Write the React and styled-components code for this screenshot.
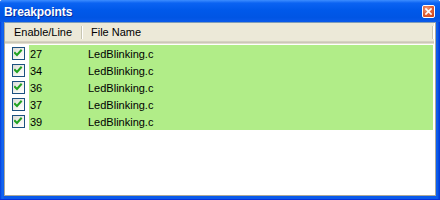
import React from 'react';
import styled, { createGlobalStyle } from 'styled-components';

const GlobalStyle = createGlobalStyle`
  html, body {
    margin: 0;
    padding: 0;
    background: #ffffff;
  }
  body {
    font-family: "Liberation Sans", Arial, sans-serif;
  }
`;

const breakpoints = [
  { line: 27, file: 'LedBlinking.c' },
  { line: 34, file: 'LedBlinking.c' },
  { line: 36, file: 'LedBlinking.c' },
  { line: 37, file: 'LedBlinking.c' },
  { line: 39, file: 'LedBlinking.c' },
];

const Window = styled.div`
  width: 440px;
  height: 200px;
  box-sizing: border-box;
  display: flex;
  flex-direction: column;
  background: linear-gradient(90deg, #0831d9 0px, #0a5aea 1px, #1667f0 3px, #0a5aea 4px, #0a5aea 436px, #1060ee 437px, #0046d8 439px, #0831d9 440px);
  border-bottom: 1px solid #0831d9;
  border-radius: 3px 3px 0 0;
  overflow: hidden;
`;

const TitleBar = styled.div`
  height: 22px;
  flex: none;
  display: flex;
  align-items: center;
  justify-content: space-between;
  padding: 0 5px 0 4px;
  background: linear-gradient(180deg, #3d8dff 0%, #0b63f2 14%, #0059ea 45%, #0055e4 80%, #0a5aea 100%);
  box-sizing: border-box;
`;

const Title = styled.span`
  color: #ffffff;
  font-weight: bold;
  font-size: 12px;
  letter-spacing: -0.1px;
  text-shadow: 1px 1px 0 #0a2e9c;
  padding-top: 1px;
`;

const CloseButton = styled.div`
  width: 13px;
  height: 13px;
  box-sizing: border-box;
  border: 1px solid #ffffff;
  border-radius: 2px;
  background: radial-gradient(circle at 35% 30%, #f0a080 0%, #e2643a 45%, #c8401a 100%);
  display: flex;
  align-items: center;
  justify-content: center;
  margin-top: 1px;
`;

const Client = styled.div`
  flex: 1;
  margin: 0 4px 3px 4px;
  background: #ffffff;
  border: 1px solid #aca899;
  border-top-color: #7f9db9;
  display: flex;
  flex-direction: column;
`;

const Header = styled.div`
  height: 18px;
  flex: none;
  display: flex;
  align-items: center;
  margin-right: 1px;
  background: #ece9d8;
  border-bottom: 1px solid #d6d2c2;
  box-shadow: 0 1px 0 #cbc7b8, 0 2px 0 #e2decd;
  margin-bottom: 3px;
  font-size: 11px;
  color: #000000;
`;

const HeaderCell = styled.div`
  width: ${(p) => p.$width}px;
  flex: ${(p) => (p.$grow ? 1 : 'none')};
  box-sizing: border-box;
  padding-left: ${(p) => p.$pad}px;
  height: 100%;
  display: flex;
  align-items: center;
  position: relative;
  &::after {
    content: '';
    position: absolute;
    right: ${(p) => (p.$grow ? 1 : 0)}px;
    top: 3px;
    bottom: 2px;
    width: 1px;
    background: #c7c5b2;
    box-shadow: 1px 0 0 #ffffff;
  }
`;

const Rows = styled.div`
  display: flex;
  flex-direction: column;
`;

const Row = styled.div`
  height: 17px;
  display: flex;
  align-items: center;
`;

const CheckCell = styled.div`
  width: 24px;
  flex: none;
  height: 100%;
  display: flex;
  align-items: center;
  padding-left: 7px;
  box-sizing: border-box;
`;

const CheckBox = styled.div`
  width: 13px;
  height: 13px;
  box-sizing: border-box;
  border: 1px solid #1c5180;
  background: linear-gradient(135deg, #dcdcd7 0%, #f4f4f0 60%, #ffffff 100%);
  display: flex;
  align-items: center;
  justify-content: center;
`;

const Highlight = styled.div`
  flex: 1;
  height: 100%;
  margin-right: 2px;
  background: #b1ed88;
  display: flex;
  align-items: center;
  font-size: 11px;
  color: #000000;
`;

const Cell = styled.span`
  width: ${(p) => p.$width}px;
  flex: none;
  padding-left: ${(p) => p.$pad}px;
  box-sizing: border-box;
`;

const Check = () => (
  <svg width="9" height="9" viewBox="0 0 9 9">
    <path d="M1 4 L3 6 L7 1.5" fill="none" stroke="#21a121" strokeWidth="2" strokeLinecap="square" />
  </svg>
);

const CloseGlyph = () => (
  <svg width="7" height="7" viewBox="0 0 7 7">
    <path d="M1 1 L6 6 M6 1 L1 6" stroke="#ffffff" strokeWidth="1.7" strokeLinecap="square" />
  </svg>
);

const App = () => {
  return (
    <>
      <GlobalStyle />
      <Window>
        <TitleBar>
          <Title>Breakpoints</Title>
          <CloseButton>
            <CloseGlyph />
          </CloseButton>
        </TitleBar>
        <Client>
          <Header>
            <HeaderCell $width={77} $pad={9}>Enable/Line</HeaderCell>
            <HeaderCell $grow $pad={9}>File Name</HeaderCell>
          </Header>
          <Rows>
            {breakpoints.map((bp) => (
              <Row key={bp.line}>
                <CheckCell>
                  <CheckBox>
                    <Check />
                  </CheckBox>
                </CheckCell>
                <Highlight>
                  <Cell $width={59} $pad={1}>{bp.line}</Cell>
                  <Cell $pad={0}>{bp.file}</Cell>
                </Highlight>
              </Row>
            ))}
          </Rows>
        </Client>
      </Window>
    </>
  );
};

export default App;
